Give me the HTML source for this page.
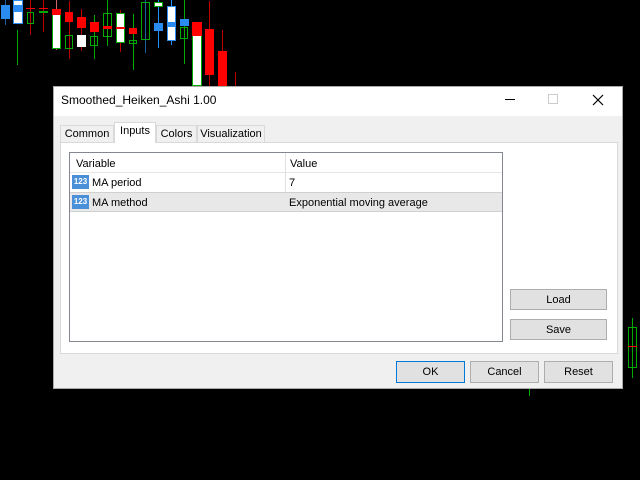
<html><head><style>
body{margin:0;width:640px;height:480px;background:#000;position:relative;overflow:hidden;font-family:"Liberation Sans",sans-serif;font-size:11px;color:#000}
.a{position:absolute;box-sizing:border-box}
.btn{position:absolute;box-sizing:border-box;background:#e1e1e1;border:1px solid #adadad;text-align:center;line-height:20px;font-size:11px}
.tab{position:absolute;top:125px;height:18px;border:1px solid #d9d9d9;border-bottom:none;background:#f0f0f0;line-height:17px;text-align:center;box-sizing:border-box}
.w{position:absolute;width:1px}
</style></head><body>
<!-- wicks -->
<div class="w" style="left:5px;top:0;height:25px;background:#1e5fa0"></div>
<div class="w" style="left:17px;top:30px;height:35px;background:#0a0"></div>
<div class="w" style="left:30px;top:0;height:35px;background:#b00"></div>
<div class="w" style="left:43px;top:0;height:32px;background:#b00"></div>
<div class="w" style="left:56px;top:0;height:50px;background:#c66"></div>
<div class="w" style="left:69px;top:1px;height:58px;background:#b00"></div>
<div class="w" style="left:81px;top:9px;height:42px;background:#b00"></div>
<div class="w" style="left:94px;top:15px;height:44px;background:#0a0"></div>
<div class="w" style="left:107px;top:0;height:46px;background:#0a0"></div>
<div class="w" style="left:120px;top:10px;height:42px;background:#b00"></div>
<div class="w" style="left:133px;top:14px;height:56px;background:#0a0"></div>
<div class="w" style="left:145px;top:0;height:53px;background:#1e5fa0"></div>
<div class="w" style="left:158px;top:0;height:48px;background:#1e90ff"></div>
<div class="w" style="left:171px;top:0;height:45px;background:#1e90ff"></div>
<div class="w" style="left:184px;top:0;height:64px;background:#0a0"></div>
<div class="w" style="left:209px;top:1px;height:85px;background:#b00"></div>
<div class="w" style="left:222px;top:30px;height:56px;background:#b00"></div>
<div class="w" style="left:235px;top:72px;height:14px;background:#b00"></div>
<div class="w" style="left:632px;top:318px;height:60px;background:#0a0"></div>
<!-- candles -->
<div class="a" style="left:1px;top:5px;width:9px;height:14px;background:#2a8cf0"></div>
<div class="a" style="left:13px;top:0;width:10px;height:24px;background:#fff;border:1px solid #2a8cf0"></div>
<div class="a" style="left:14px;top:5px;width:8px;height:7px;background:#2a8cf0"></div>
<div class="a" style="left:27px;top:12px;width:7px;height:12px;border:1px solid #0a0"></div>
<div class="a" style="left:26px;top:8px;width:9px;height:1px;background:#e00"></div>
<div class="a" style="left:39px;top:8px;width:9px;height:1px;background:#e00"></div>
<div class="a" style="left:39px;top:11px;width:9px;height:2px;background:#0a0"></div>
<div class="a" style="left:52px;top:9px;width:9px;height:40px;background:#fff;border:1px solid #0a0"></div>
<div class="a" style="left:52px;top:9px;width:9px;height:6px;background:#f00"></div>
<div class="a" style="left:65px;top:12px;width:8px;height:10px;background:#f00"></div>
<div class="a" style="left:65px;top:35px;width:8px;height:14px;border:1px solid #0a0"></div>
<div class="a" style="left:77px;top:17px;width:9px;height:11px;background:#f00"></div>
<div class="a" style="left:77px;top:35px;width:9px;height:12px;background:#fff"></div>
<div class="a" style="left:90px;top:22px;width:9px;height:10px;background:#f00"></div>
<div class="a" style="left:90px;top:36px;width:8px;height:10px;border:1px solid #0a0"></div>
<div class="a" style="left:103px;top:13px;width:9px;height:24px;border:1px solid #0a0"></div>
<div class="a" style="left:103px;top:26px;width:9px;height:3px;background:#f00"></div>
<div class="a" style="left:116px;top:13px;width:9px;height:30px;background:#fff;border:1px solid #0a0"></div>
<div class="a" style="left:116px;top:27px;width:9px;height:2px;background:#f00"></div>
<div class="a" style="left:129px;top:28px;width:8px;height:6px;background:#f00"></div>
<div class="a" style="left:129px;top:40px;width:8px;height:4px;border:1px solid #0a0"></div>
<div class="a" style="left:141px;top:2px;width:9px;height:38px;border:1px solid #0a0"></div>
<div class="a" style="left:154px;top:23px;width:9px;height:8px;background:#2a8cf0"></div>
<div class="a" style="left:154px;top:2px;width:9px;height:5px;background:#fff;border:1px solid #0a0"></div>
<div class="a" style="left:167px;top:6px;width:9px;height:35px;background:#fff;border:1px solid #2a8cf0"></div>
<div class="a" style="left:167px;top:22px;width:9px;height:5px;background:#2a8cf0"></div>
<div class="a" style="left:180px;top:19px;width:9px;height:7px;background:#2a8cf0"></div>
<div class="a" style="left:180px;top:27px;width:8px;height:12px;border:1px solid #0a0"></div>
<div class="a" style="left:192px;top:22px;width:10px;height:64px;background:#fff;border:1px solid #0a0"></div>
<div class="a" style="left:192px;top:22px;width:10px;height:14px;background:#f00"></div>
<div class="a" style="left:205px;top:29px;width:9px;height:46px;background:#f00"></div>
<div class="a" style="left:218px;top:51px;width:9px;height:35px;background:#f00"></div>
<div class="a" style="left:628px;top:327px;width:9px;height:41px;border:1px solid #0a0"></div>
<div class="a" style="left:628px;top:346px;width:9px;height:1px;background:#f00"></div>
<div class="a" style="left:529px;top:388px;width:1px;height:8px;background:#0a0"></div>
<!-- dialog -->
<div class="a" style="left:53px;top:86px;width:570px;height:303px;background:#f0f0f0;border:1px solid #aaa"></div>
<div class="a" style="left:54px;top:87px;width:568px;height:29px;background:#fff"></div>
<div class="a" style="left:61px;top:93px;font-size:12px">Smoothed_Heiken_Ashi 1.00</div>
<div class="a" style="left:505px;top:99px;width:10px;height:1px;background:#000"></div>
<div class="a" style="left:548px;top:94px;width:10px;height:10px;border:1px solid #ccc"></div>
<svg class="a" style="left:592px;top:94px" width="12" height="12"><path d="M1 1L11 11M11 1L1 11" stroke="#000" stroke-width="1.2"/></svg>
<div class="tab" style="left:60px;width:54px">Common</div>
<div class="tab" style="left:114px;top:122px;width:42px;height:21px;background:#fff;z-index:2">Inputs</div>
<div class="tab" style="left:156px;width:41px">Colors</div>
<div class="tab" style="left:197px;width:68px">Visualization</div>
<div class="a" style="left:60px;top:142px;width:558px;height:212px;background:#fff;border:1px solid #d9d9d9"></div>
<div class="a" style="left:69px;top:152px;width:434px;height:190px;background:#fff;border:1px solid #828790"></div>
<div class="a" style="left:70px;top:153px;width:432px;height:20px;border-bottom:1px solid #e5e5e5"></div>
<div class="a" style="left:285px;top:153px;width:1px;height:59px;background:#e0e0e0"></div>
<div class="a" style="left:76px;top:158px">Variable</div>
<div class="a" style="left:290px;top:158px">Value</div>
<div class="a" style="left:70px;top:192px;width:432px;height:20px;background:#e8e8e8;border-top:1px solid #d0d0d0;border-bottom:1px solid #d0d0d0"></div>
<div class="a" style="left:72px;top:175px;width:17px;height:14px;background:#4a90d9;color:#fff;font-size:8px;font-weight:bold;line-height:14px;text-align:center">123</div>
<div class="a" style="left:72px;top:195px;width:17px;height:14px;background:#4a90d9;color:#fff;font-size:8px;font-weight:bold;line-height:14px;text-align:center">123</div>
<div class="a" style="left:92px;top:177px">MA period</div>
<div class="a" style="left:289px;top:177px">7</div>
<div class="a" style="left:92px;top:197px">MA method</div>
<div class="a" style="left:289px;top:197px">Exponential moving average</div>
<div class="btn" style="left:510px;top:289px;width:97px;height:21px">Load</div>
<div class="btn" style="left:510px;top:319px;width:97px;height:21px">Save</div>
<div class="btn" style="left:396px;top:361px;width:69px;height:22px;border:1px solid #0078d7">OK</div>
<div class="btn" style="left:470px;top:361px;width:69px;height:22px">Cancel</div>
<div class="btn" style="left:544px;top:361px;width:69px;height:22px">Reset</div>
</body></html>
